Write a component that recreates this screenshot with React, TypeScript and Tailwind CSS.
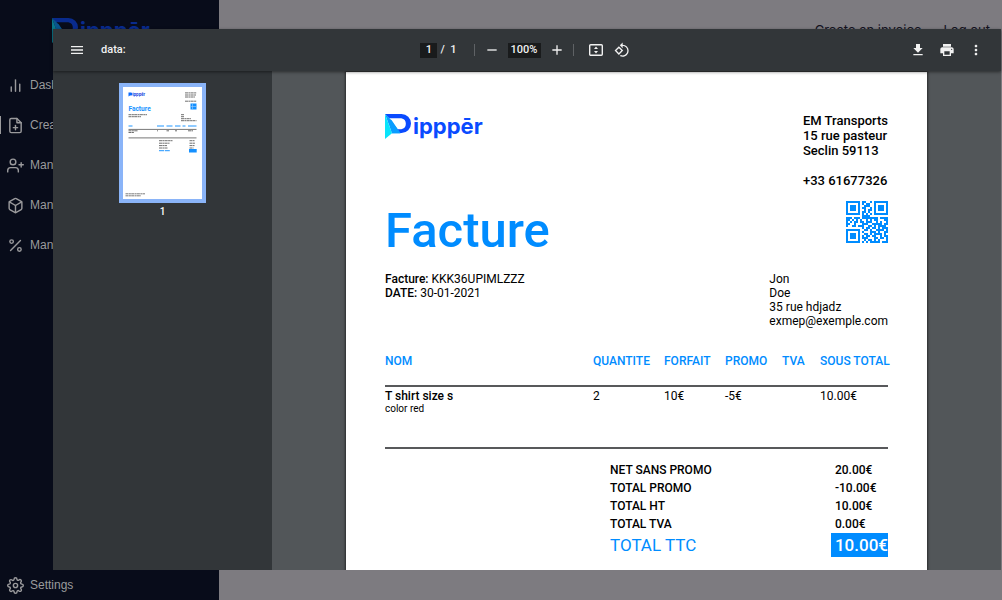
import {
  FiBarChart2,
  FiBox,
  FiFilePlus,
  FiPercent,
  FiSettings,
  FiUserPlus,
} from "react-icons/fi";
import {
  MdAdd,
  MdGetApp,
  MdMenu,
  MdMoreVert,
  MdPrint,
  MdRemove,
  MdRotate90DegreesCcw,
} from "react-icons/md";

const navItems = [
  { label: "Dashboard", icon: FiBarChart2, active: false },
  { label: "Create invoice", icon: FiFilePlus, active: true },
  { label: "Manage clients", icon: FiUserPlus, active: false },
  { label: "Manage products", icon: FiBox, active: false },
  { label: "Manage taxes", icon: FiPercent, active: false },
];

const columns = ["QUANTITE", "FORFAIT", "PROMO", "TVA", "SOUS TOTAL"];

const totals = [
  ["NET SANS PROMO", "20.00€"],
  ["TOTAL PROMO", "-10.00€"],
  ["TOTAL HT", "10.00€"],
  ["TOTAL TVA", "0.00€"],
];

const qrRows = [
  "#######.##..#.#######",
  "#.....#.#.##..#.....#",
  "#.###.#..###..#.###.#",
  "#.###.#.##..#.#.###.#",
  "#.###.#..#.##.#.###.#",
  "#.....#.##.#..#.....#",
  "#######.#.#.#.#######",
  "........####.........",
  "###.###.########.####",
  "##.#.#.#..#.#.##...##",
  "#.#.##.##.###..#.#..#",
  "##..#...###..#####.##",
  "#..##.###..##.#.####.",
  "........#.##.##.#.###",
  "#######..##.#..####.#",
  "#.....#.#...###.#..##",
  "#.###.#..##.#.####.#.",
  "#.###.#.#.##.##..#.##",
  "#.###.#.###...##.##.#",
  "#.....#..#.##.#.#...#",
  "#######.#.#.#####.###",
];

function Logo() {
  return (
    <div className="flex h-[26px] items-end">
      <svg viewBox="0 0 26 25" className="h-[25px] w-[26px] shrink-0" aria-hidden="true">
        <path d="M0 0H16.5A9.5 9.5 0 0 1 16.5 19H13L11 15.2H16.3A5.6 5.6 0 0 0 16.3 4.2H4Z" fill="#0a4bff" />
        <path d="M4 4.900L6.500 6L15.500 19.200H7Z" fill="#0a9dff" />
        <path d="M0 0L4 3.500L15.500 19.200H7Z" fill="#0a9dff" />
        <path d="M0 0L7 19.200L0 25Z" fill="#08e4fb" />
      </svg>
      <span className="ml-[2px] font-[Inter,sans-serif] text-[22px] leading-[25px] font-bold text-[#0a4bff]">
        ippp&#275;r
      </span>
    </div>
  );
}

function QrCode() {
  return (
    <svg viewBox="0 0 21 21" className="size-[42px]" shapeRendering="crispEdges" role="img" aria-label="QR code">
      {qrRows.map((row, y) =>
        row.split("").map((cell, x) =>
          cell === "#" ? <rect key={`${x}-${y}`} x={x} y={y} width="1" height="1" fill="#008cff" /> : null,
        ),
      )}
    </svg>
  );
}

function Thumbnail() {
  return (
    <svg viewBox="0 0 79 112" className="block w-full bg-white" aria-hidden="true">
      <path d="M5.500 5.500h2.500a1.500 1.500 0 0 1 0 3h-1l-1.500 1z" fill="#0a6bff" />
      <text x="9.500" y="8.500" fontSize="4" fontWeight="700" fontFamily="Inter, sans-serif" fill="#0a3bdf">ipppēr</text>
      <text x="5.400" y="24" fontSize="6.600" fontWeight="700" fontFamily="Roboto, sans-serif" fill="#1793ff">Facture</text>
      <g stroke="#333" strokeWidth="1" strokeDasharray="3 .4 2 .3" opacity=".7">
        <path d="M62 5.900H73.500M62 8H73M62 10H72M62 14.200H73.500" />
        <path d="M5.500 27.700H24M5.500 29.700H18M58 27.700H61M58 29.700H61M58 31.700H68M58 33.700H73.500" />
        <path d="M5.500 43.800H15M5.500 45.500H11M34 43.800H35M43.500 43.800H46M52 43.800H54M65 43.800H70" />
        <path d="M36 53.700H49.500M36 56.200H46.500M36 58.600H44M36 61H44.500M66.500 53.700H71.500M66.500 56.200H72M66.500 58.600H71.500M66.500 61H70.500" />
        <path d="M2.500 106.800H22M2.500 108.800H18" opacity=".9" />
      </g>
      <g stroke="#2196ff" strokeWidth="1">
        <path d="M5.500 39H9.500M34 39H41M43.500 39H49.500M52 39H57.500M59.500 39H62.500M65 39H73.500" />
        <path d="M36 63.700H47.500" strokeDasharray="5 .8" />
      </g>
      <path d="M5.500 42.400H73.500M5.500 50.900H73.500" stroke="#777" strokeWidth="1" />
      <path d="M67.500 16.500h6v6h-6zM66 62.100h7.700v3.400h-7.700z" fill="#1490ff" />
      <path d="M69.500 17v5M68 19.500h5" stroke="#9fd0ff" strokeWidth=".6" />
    </svg>
  );
}

function FitPageIcon() {
  return (
    <svg viewBox="0 0 16 16" className="size-4" aria-hidden="true">
      <rect x="1.700" y="2.700" width="12.600" height="10.600" rx="1" fill="none" stroke="currentColor" strokeWidth="1.400" />
      <path d="M8 4.600L10 7H6ZM8 11.400L6 9H10Z" fill="currentColor" />
    </svg>
  );
}

function Toolbar() {
  return (
    <header className="relative z-10 grid h-[42px] shrink-0 grid-cols-[1fr_auto_1fr] items-center bg-[#323639] font-[Roboto,sans-serif] text-[11px] font-medium text-[#f1f1f1] shadow-[0_1px_3px_rgba(0,0,0,0.5)]">
      <div className="flex items-center gap-4 pl-4">
        <button type="button" aria-label="Toggle sidebar">
          <MdMenu className="size-4" />
        </button>
        <h1>data:</h1>
      </div>
      <div className="flex items-center pr-1">
        <input
          aria-label="Page number"
          defaultValue="1"
          className="h-[15px] w-[17px] bg-[#191b1c] text-center text-[11px] outline-none"
        />
        <span className="ml-[3px] whitespace-pre">/  1</span>
        <span className="mx-[17px] h-3 w-px bg-[#5f6265]" />
        <div className="-ml-2 flex items-center gap-2">
          <button type="button" aria-label="Zoom out">
            <MdRemove className="size-4" />
          </button>
          <input
            aria-label="Zoom level"
            defaultValue="100%"
            className="h-[15px] w-[33px] bg-[#191b1c] text-center text-[11px] outline-none"
          />
          <button type="button" aria-label="Zoom in">
            <MdAdd className="size-4" />
          </button>
        </div>
        <span className="mr-[14px] ml-2 h-3 w-px bg-[#5f6265]" />
        <div className="flex items-center gap-[10px]">
          <button type="button" aria-label="Fit to page">
            <FitPageIcon />
          </button>
          <button type="button" aria-label="Rotate counterclockwise">
            <MdRotate90DegreesCcw className="size-4" />
          </button>
        </div>
      </div>
      <div className="flex items-center justify-end gap-[13px] pr-[17px]">
        <button type="button" aria-label="Download">
          <MdGetApp className="size-4" />
        </button>
        <button type="button" aria-label="Print">
          <MdPrint className="size-4" />
        </button>
        <button type="button" aria-label="More actions">
          <MdMoreVert className="size-4" />
        </button>
      </div>
    </header>
  );
}

function Invoice() {
  return (
    <article className="w-[581px] bg-white px-[39px] pt-[41px] font-[Roboto,sans-serif] text-[12px] leading-[14px] text-black shadow-[0_0_2px_1px_rgba(0,0,0,0.5)]">
      <div className="flex items-start justify-between">
        <Logo />
        <address className="text-[13px] leading-[15px] font-medium not-italic">
          EM Transports
          <br />
          15 rue pasteur
          <br />
          Seclin 59113
          <br />
          <br />
          +33 61677326
        </address>
      </div>
      <div className="mt-[13px] flex items-start justify-between">
        <h2 className="text-[49px] leading-[60px] font-medium text-[#008cff]">Facture</h2>
        <QrCode />
      </div>
      <div className="mt-[11px] flex items-start justify-between">
        <p>
          <span className="font-medium">Facture:</span> KKK36UPIMLZZZ
          <br />
          <span className="font-medium">DATE:</span> 30-01-2021
        </p>
        <p>
          Jon
          <br />
          Doe
          <br />
          35 rue hdjadz
          <br />
          exmep@exemple.com
        </p>
      </div>
      <table className="mt-[26px] w-full table-fixed border-collapse text-left">
        <colgroup>
          <col />
          <col className="w-[71px]" />
          <col className="w-[61px]" />
          <col className="w-[57px]" />
          <col className="w-[38px]" />
          <col className="w-[68px]" />
        </colgroup>
        <thead>
          <tr className="h-8 border-b-2 border-[#58595b] align-top whitespace-nowrap text-[#008cff]">
            <th className="font-medium">NOM</th>
            {columns.map((c) => (
              <th key={c} className="font-medium">
                {c}
              </th>
            ))}
          </tr>
        </thead>
        <tbody>
          <tr className="h-[62px] border-b-2 border-[#58595b] align-top">
            <td className="pt-[2px]">
              <div className="font-medium">T shirt size s</div>
              <div className="text-[10px] leading-3">color red</div>
            </td>
            <td className="pt-[2px]">2</td>
            <td className="pt-[2px]">10€</td>
            <td className="pt-[2px]">-5€</td>
            <td />
            <td className="pt-[2px]">10.00€</td>
          </tr>
        </tbody>
      </table>
      <table className="mt-3 ml-auto w-[278px] border-collapse text-left font-medium">
        <tbody>
          {totals.map(([label, value]) => (
            <tr key={label} className="h-[18px]">
              <th className="font-medium">{label}</th>
              <td className="w-[57px] pl-1">{value}</td>
            </tr>
          ))}
          <tr className="text-[17px] leading-6">
            <th className="font-normal text-[#008cff]">TOTAL TTC</th>
            <td className="bg-[#008cff] pl-1 whitespace-nowrap text-white">10.00€</td>
          </tr>
        </tbody>
      </table>
    </article>
  );
}

export default function App() {
  return (
    <div className="relative flex h-screen overflow-hidden bg-[#7d7b80]">
      <aside className="flex w-[219px] shrink-0 flex-col bg-[#080c1a] pb-[6px] font-['Liberation_Sans',sans-serif] text-[12px] text-[#9a9a9c]">
        <div className="mt-[17px] mb-8 pl-[52px] opacity-50">
          <Logo />
        </div>
        <nav className="flex flex-col gap-[22px] pt-px">
          {navItems.map(({ label, icon: Icon, active }) => (
            <a
              key={label}
              href="#"
              className={`flex h-[18px] items-center gap-[6px] border-l pl-[6px] whitespace-nowrap ${active ? "border-[#9a9a9c]" : "border-transparent"}`}
            >
              <Icon className="size-[17px]" />
              {label}
            </a>
          ))}
        </nav>
        <a href="#" className="mt-auto flex h-[18px] items-center gap-[6px] pl-[7px]">
          <FiSettings className="size-[17px]" />
          Settings
        </a>
      </aside>
      <div className="flex-1">
        <div className="flex justify-end gap-[22px] pt-[21px] pr-3 font-[Inter,sans-serif] text-[13px] leading-[18px] text-[#14121f]">
          <a href="#">Create an invoice</a>
          <a href="#">Log out</a>
        </div>
      </div>

      <section
        role="dialog"
        aria-label="Invoice preview"
        className="absolute top-[29px] right-px bottom-[30px] left-[53px] flex flex-col bg-[#525659]"
      >
        <Toolbar />
        <div className="flex min-h-0 flex-1">
          <div className="flex w-[219px] shrink-0 flex-col items-center bg-[#323639] pt-3 font-[Roboto,sans-serif] text-[10px] leading-[14px] font-medium text-white">
            <button type="button" className="flex flex-col items-center gap-[2px]">
              <span className="block w-[87px] border-4 border-[#8ab4f8]">
                <Thumbnail />
              </span>
              1
            </button>
          </div>
          <div className="flex min-w-0 flex-1 justify-center overflow-hidden pt-px">
            <Invoice />
          </div>
        </div>
      </section>
    </div>
  );
}
